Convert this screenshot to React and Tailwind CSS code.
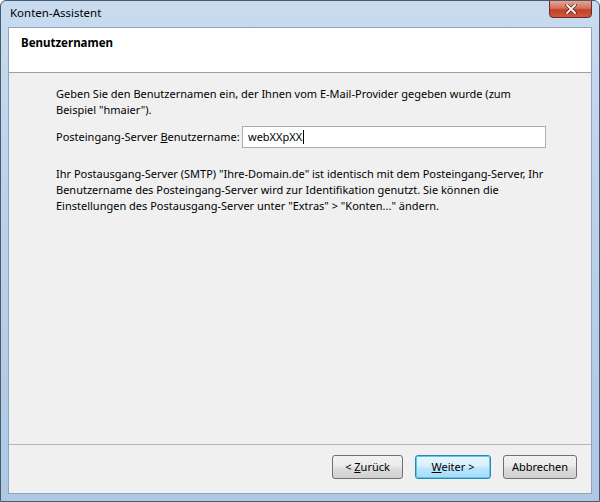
import React from "react";

export default function App() {
  const font = { fontFamily: '"Segoe UI", "Noto Sans", "Open Sans", sans-serif' };
  return (
    <div className="w-[600px] h-[502px] bg-[linear-gradient(180deg,#c9dbee_0%,#bcd2ea_40%,#aec8e4_100%)] border border-[#4a5a6e] rounded-t-[6px] flex flex-col relative overflow-hidden text-[11px] text-black" style={font}>
      {/* title bar */}
      <div className="h-[26px] flex items-start pl-[9px] pt-[4px] relative">
        <span className="text-[11.5px] leading-[16px] text-black">Konten-Assistent</span>
        <div className="absolute right-[7px] top-[-1px] w-[43px] h-[18px] rounded-b-[4px] border border-[#6b2a22] bg-[linear-gradient(180deg,#e8a493_0%,#d4705c_45%,#c2402a_55%,#d0583e_100%)] flex items-center justify-center">
          <svg width="12" height="10" viewBox="0 0 12 10">
            <path d="M2 1 L10 9 M10 1 L2 9" stroke="#5a2018" strokeWidth="3.2" strokeLinecap="square" />
            <path d="M2 1 L10 9 M10 1 L2 9" stroke="#ffffff" strokeWidth="1.8" strokeLinecap="square" />
          </svg>
        </div>
      </div>
      {/* client */}
      <div className="mx-[7px] mb-[7px] flex-1 border border-[#8ea3bd] bg-[#f0f0f0] flex flex-col">
        <div className="h-[45px] bg-white border-b border-[#a0a0a0] pl-[12px] pt-[7px]">
          <div className="font-bold text-[11.5px] leading-[16px]">Benutzernamen</div>
        </div>
        <div className="flex-1 pl-[47px] pr-[20px] pt-[13px]">
          <div className="leading-[16px] whitespace-nowrap">
            <div>Geben Sie den Benutzernamen ein, der Ihnen vom E-Mail-Provider gegeben wurde (zum</div>
            <div>Beispiel "hmaier").</div>
          </div>
          <div className="flex items-center mt-[8px]">
            <span className="w-[186px] leading-[16px] whitespace-nowrap">
              Posteingang-Server <span className="underline">B</span>enutzername:
            </span>
            <div className="w-[304px] h-[22px] bg-white border border-[#abadb3] border-t-[#aaaaaa] flex items-center pl-[5px]">
              <span className="leading-[16px]">webXXpXX</span>
              <span className="w-px h-[14px] bg-black ml-[1px]"></span>
            </div>
          </div>
          <div className="leading-[16px] mt-[18px] whitespace-nowrap">
            <div>Ihr Postausgang-Server (SMTP) "Ihre-Domain.de" ist identisch mit dem Posteingang-Server, Ihr</div>
            <div>Benutzername des Posteingang-Server wird zur Identifikation genutzt. Sie können die</div>
            <div>Einstellungen des Postausgang-Server unter "Extras" &gt; "Konten..." ändern.</div>
          </div>
        </div>
        <div className="border-t border-[#b5b5b5] h-[49px] flex items-start justify-end pr-[14px] pt-[10px] gap-[12px]">
          <button className="w-[71px] h-[24px] rounded-[3px] border border-[#707070] bg-[linear-gradient(180deg,#f2f2f2_0%,#ebebeb_45%,#dddddd_55%,#cfcfcf_100%)] leading-[16px]">
            &lt; <span className="underline">Z</span>urück
          </button>
          <button className="w-[76px] h-[24px] rounded-[3px] border border-[#3c7fb1] bg-[linear-gradient(180deg,#eaf6fd_0%,#d9f0fc_45%,#bee6fd_55%,#a7d9f5_100%)] shadow-[inset_0_0_0_1px_#48d0f5] leading-[16px]">
            <span className="underline">W</span>eiter &gt;
          </button>
          <button className="w-[74px] h-[24px] rounded-[3px] border border-[#707070] bg-[linear-gradient(180deg,#f2f2f2_0%,#ebebeb_45%,#dddddd_55%,#cfcfcf_100%)] leading-[16px]">
            Abbrechen
          </button>
        </div>
      </div>
    </div>
  );
}
